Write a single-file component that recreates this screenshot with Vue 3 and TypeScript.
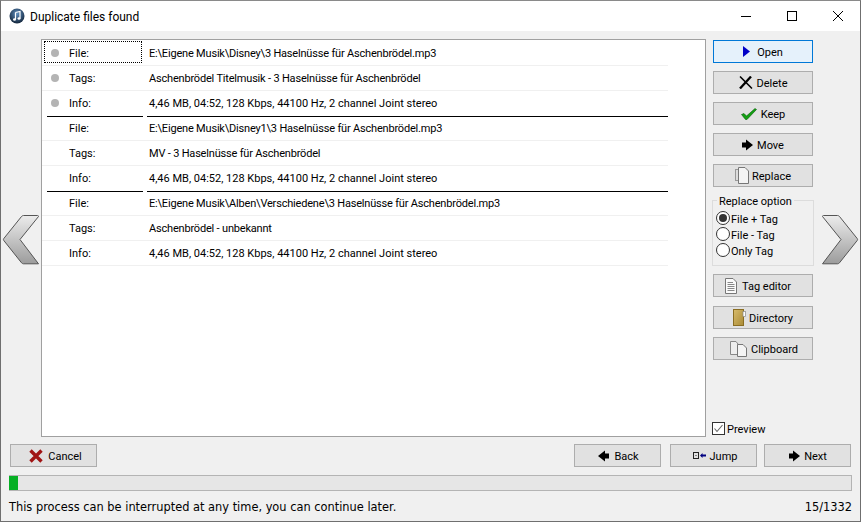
<script setup lang="ts">
interface Row { label: string; value: string; dot?: boolean; focus?: boolean; rule?: boolean }
const rows: Row[] = [
  { label: 'File:', value: 'E:\\Eigene Musik\\Disney\\3 Haselnüsse für Aschenbrödel.mp3', dot: true, focus: true },
  { label: 'Tags:', value: 'Aschenbrödel Titelmusik - 3 Haselnüsse für Aschenbrödel', dot: true },
  { label: 'Info:', value: '4,46 MB, 04:52, 128 Kbps, 44100 Hz, 2 channel Joint stereo', dot: true, rule: true },
  { label: 'File:', value: 'E:\\Eigene Musik\\Disney1\\3 Haselnüsse für Aschenbrödel.mp3' },
  { label: 'Tags:', value: 'MV - 3 Haselnüsse für Aschenbrödel' },
  { label: 'Info:', value: '4,46 MB, 04:52, 128 Kbps, 44100 Hz, 2 channel Joint stereo', rule: true },
  { label: 'File:', value: 'E:\\Eigene Musik\\Alben\\Verschiedene\\3 Haselnüsse für Aschenbrödel.mp3' },
  { label: 'Tags:', value: 'Aschenbrödel - unbekannt' },
  { label: 'Info:', value: '4,46 MB, 04:52, 128 Kbps, 44100 Hz, 2 channel Joint stereo' },
]
const options = ['File + Tag', 'File - Tag', 'Only Tag']
</script>

<template>
  <div class="window">
    <header class="titlebar">
      <svg class="app-icon" viewBox="0 0 16 16" width="16" height="16">
        <defs>
          <radialGradient id="ball" cx="50%" cy="35%" r="70%">
            <stop offset="0" stop-color="#5f8fc0" />
            <stop offset="1" stop-color="#0c1c30" />
          </radialGradient>
        </defs>
        <circle cx="8" cy="8" r="7.500" fill="url(#ball)" />
        <path d="M6.500 4.500 L11 3.500 V10.500 M6.500 4.500 V11.500" stroke="#fff" stroke-width="1.200" fill="none" />
        <ellipse cx="5.500" cy="11.500" rx="1.500" ry="1.200" fill="#fff" />
        <ellipse cx="10" cy="10.500" rx="1.500" ry="1.200" fill="#fff" />
      </svg>
      <span class="title">Duplicate files found</span>
      <div class="controls">
        <svg viewBox="0 0 46 30" width="46" height="30"><path d="M18 15.500h10" stroke="#000" /></svg>
        <svg viewBox="0 0 46 30" width="46" height="30"><rect x="18.500" y="10.500" width="9" height="9" fill="none" stroke="#000" /></svg>
        <svg viewBox="0 0 46 30" width="46" height="30"><path d="M18 10l10 10M28 10L18 20" stroke="#000" fill="none" /></svg>
      </div>
    </header>

    <main class="content">
      <div class="main-row">
        <div class="arrow-col left">
          <svg viewBox="0 0 36 50" width="36" height="50">
            <defs>
              <linearGradient id="chev" x1="0" y1="0" x2="0" y2="1">
                <stop offset="0" stop-color="#ececec" />
                <stop offset="1" stop-color="#9c9c9c" />
              </linearGradient>
            </defs>
            <path d="M35.500 1.500Q35.500 .5 34.500 .5H20.500Q19.500 .5 18.500 1.500L.8 23.500Q0 24.500 .8 25.500L18.500 47.800Q19.500 48.800 20.500 48.800H35.500L17 24.500Z" fill="url(#chev)" stroke="#555" stroke-width="1" />
          </svg>
        </div>

        <section class="list">
          <div v-for="(r, i) in rows" :key="i" class="row" :class="{ rule: r.rule }">
            <div class="cells">
              <div class="label-cell" :class="{ focus: r.focus }">
                <span class="dot-slot"><i v-if="r.dot" class="dot"></i></span>
                <span>{{ r.label }}</span>
              </div>
              <div class="value-cell" :class="{ tight: r.label !== 'Info:' }">{{ r.value }}</div>
            </div>
            <div class="sep"><i></i><i></i></div>
          </div>
        </section>

        <aside class="side">
          <button class="btn active">
            <svg viewBox="0 0 7 11" width="7" height="11"><path d="M0 0L7 5.500L0 11Z" fill="#0000c8" /></svg>
            <span>Open</span>
          </button>
          <button class="btn">
            <svg viewBox="0 0 14 13" width="14" height="13">
              <path d="M1 .5L13 12.500" stroke="#000" stroke-width="1.500" />
              <path d="M12 .5L1 12.500" stroke="#000" stroke-width="2.300" />
            </svg>
            <span>Delete</span>
          </button>
          <button class="btn">
            <svg viewBox="0 0 16 12" width="16" height="12"><path d="M.5 6.500L3 5.500L5.500 8L14 .5L15.500 1.500L6 11.500H4.500Z" fill="#12a012" stroke="#0a5c0a" stroke-width=".6" /></svg>
            <span>Keep</span>
          </button>
          <button class="btn">
            <svg viewBox="0 0 11 12" width="11" height="12"><path d="M0 3.500H4V.5L11 6L4 11.500V8.500H0Z" fill="#000" /></svg>
            <span>Move</span>
          </button>
          <button class="btn replace-btn">
            <svg viewBox="0 0 14 17" width="14" height="17">
              <rect x=".5" y="2.500" width="6" height="11" fill="#ddd" stroke="#999" />
              <path d="M3.500 .5H10L13.500 4V16.500H3.500Z" fill="#f4f4f4" stroke="#777" />
            </svg>
            <span>Replace</span>
          </button>

          <fieldset class="group">
            <legend>Replace option</legend>
            <label v-for="(o, i) in options" :key="o" class="radio">
              <span class="radio-mark"><i v-if="i === 0"></i></span>
              <span class="radio-text">{{ o }}</span>
            </label>
          </fieldset>

          <button class="btn tag-btn">
            <svg viewBox="0 0 12 16" width="12" height="16">
              <path d="M.5 .5H8L11.500 4V15.500H.5Z" fill="#fafafa" stroke="#777" />
              <path d="M2.500 4.500H8M2.500 6.500H9.500M2.500 8.500H9.500M2.500 10.500H9.500M2.500 12.500H9.500" stroke="#888" />
            </svg>
            <span>Tag editor</span>
          </button>
          <button class="btn dir-btn">
            <svg viewBox="0 0 13 17" width="13" height="17">
              <defs>
                <linearGradient id="gold" x1="0" y1="0" x2="1" y2="1">
                  <stop offset="0" stop-color="#d8bc6c" />
                  <stop offset="1" stop-color="#a98a36" />
                </linearGradient>
              </defs>
              <rect x=".5" y=".5" width="10" height="16" fill="url(#gold)" stroke="#8a6d22" />
              <rect x="10" y="2.500" width="2.500" height="5" fill="#fff" stroke="#888" stroke-width=".7" />
            </svg>
            <span>Directory</span>
          </button>
          <button class="btn clip-btn">
            <svg viewBox="0 0 17 16" width="17" height="16">
              <path d="M.5 .5H6L8 3V13.500H.5Z" fill="#eee" stroke="#888" />
              <path d="M7.500 3.500H13L16.500 7V15.500H7.500Z" fill="#f4f4f4" stroke="#777" />
            </svg>
            <span>Clipboard</span>
          </button>

          <label class="preview">
            <svg viewBox="0 0 13 13" width="13" height="13">
              <rect x=".5" y=".5" width="12" height="12" fill="#fff" stroke="#333" />
              <path d="M2.500 6.500L5 9.500L10.500 3" stroke="#666" stroke-width="1.100" fill="none" />
            </svg>
            <span class="preview-text">Preview</span>
          </label>
        </aside>

        <div class="arrow-col right">
          <svg viewBox="0 0 36 50" width="36" height="50">
            <defs>
              <linearGradient id="chev2" x1="0" y1="0" x2="0" y2="1">
                <stop offset="0" stop-color="#ececec" />
                <stop offset="1" stop-color="#9c9c9c" />
              </linearGradient>
            </defs>
            <path d="M.5 1.500Q.5 .5 1.500 .5H15.500Q16.500 .5 17.500 1.500L35.200 23.500Q36 24.500 35.200 25.500L17.500 47.800Q16.500 48.800 15.500 48.800H.5L19 24.500Z" fill="url(#chev2)" stroke="#555" stroke-width="1" />
          </svg>
        </div>
      </div>

      <div class="nav-row">
        <button class="btn nav cancel">
          <svg viewBox="0 0 14 14" width="14" height="14"><path d="M1.500 1.500L12.500 12.500M12.500 1.500L1.500 12.500" stroke="#a01414" stroke-width="3.400" /></svg>
          <span>Cancel</span>
        </button>
        <div class="nav-right">
          <button class="btn nav back">
            <svg viewBox="0 0 11 12" width="11" height="12"><path d="M11 3.500H7V.5L0 6L7 11.500V8.500H11Z" fill="#000" /></svg>
            <span>Back</span>
          </button>
          <button class="btn nav jump">
            <svg viewBox="0 0 13 7" width="13" height="7">
              <rect x=".5" y=".5" width="5" height="6" fill="none" stroke="#222" />
              <rect x="2.500" y="3" width="1" height="1" fill="#222" />
              <path d="M7 3.500L9.500 1V2.500H13V4.500H9.500V6Z" fill="#000080" />
            </svg>
            <span>Jump</span>
          </button>
          <button class="btn nav next">
            <svg viewBox="0 0 11 12" width="11" height="12"><path d="M0 3.500H4V.5L11 6L4 11.500V8.500H0Z" fill="#000" /></svg>
            <span>Next</span>
          </button>
        </div>
      </div>

      <div class="progress"><div class="fill" :style="{ width: '9px' }"></div></div>

      <footer class="status">
        <span>This process can be interrupted at any time, you can continue later.</span>
        <span>15/1332</span>
      </footer>
    </main>
  </div>
</template>

<style scoped>
.window {
  width: 861px;
  height: 522px;
  box-sizing: border-box;
  border: 1px solid #6f6f6f;
  border-top-color: #8a8a8a;
  background: #f0f0f0;
  display: flex;
  flex-direction: column;
  font-family: Roboto, "Noto Sans", sans-serif;
  font-size: 11px;
  color: #000;
  overflow: hidden;
}
.titlebar {
  height: 30px;
  flex: none;
  background: #fff;
  display: flex;
  align-items: center;
  padding-left: 8px;
}
.app-icon { flex: none; }
.title { margin-left: 5px; margin-top: 2px; font-size: 12px; }
.controls { margin-left: auto; display: flex; margin-right: -1px; }
.controls svg { display: block; }
.content { flex: 1; display: flex; flex-direction: column; min-height: 0; }
.main-row { display: flex; margin-top: 8px; height: 398px; flex: none; }
.arrow-col { display: flex; align-items: center; padding-top: 4px; }
.arrow-col svg { overflow: visible; }
.arrow-col.left { width: 40px; padding-left: 2px; box-sizing: border-box; }
.arrow-col.right { padding-left: 9px; }
.list {
  width: 665px;
  box-sizing: border-box;
  background: #fff;
  border: 1px solid #a0a0a0;
  padding-top: 1px;
  flex: none;
}
.row { width: 626px; }
.cells { display: flex; height: 24px; }
.row.rule .cells { height: 25px; }
.row.rule + .row .cells { height: 23px; }
.sep { height: 1px; display: flex; background: #f0f0f0; }
.sep i { display: none; }
.row.rule .sep { background: none; }
.row.rule .sep i { display: block; height: 1px; background: #000; }
.row.rule .sep i:first-child { width: 96px; margin-left: 5px; }
.row.rule .sep i:last-child { flex: 1; margin-left: 4px; }
.label-cell {
  width: 98px;
  margin-left: 2px;
  height: 22px;
  padding-top: 2px;
  box-sizing: border-box;
  display: flex;
  align-items: center;
  border: 1px dotted transparent;
  flex: none;
}
.row.rule + .row .label-cell { padding-top: 0; }
.label-cell.focus { border-color: #000; }
.dot-slot { width: 24px; flex: none; display: flex; padding-left: 6px; box-sizing: border-box; }
.dot { width: 8px; height: 8px; border-radius: 50%; background: #b4b4b4; display: block; }
.value-cell {
  margin-left: 7px;
  flex: 1;
  line-height: 26px;
  white-space: nowrap;
}
.row.rule + .row .value-cell { line-height: 24px; }
.value-cell.tight { letter-spacing: -0.19px; }
.side { width: 100px; margin-left: 7px; flex: none; display: flex; flex-direction: column; align-items: stretch; padding-top: 1px; }
.btn {
  height: 23px;
  box-sizing: border-box;
  background: #e1e1e1;
  border: 1px solid #adadad;
  padding: 0;
  margin: 0 0 8px;
  font: inherit;
  color: #000;
  display: flex;
  align-items: center;
  justify-content: center;
  gap: 4px;
  flex: none;
}
.btn svg { flex: none; }
.btn span { margin-top: 2px; }
.btn.active { background: #e5f1fb; border-color: #0078d7; gap: 7px; }
.replace-btn { gap: 3px; }
.group {
  margin: -3px -1px 0;
  padding: 1px 0 0 3px;
  height: 74px;
  box-sizing: border-box;
  border: 1px solid #dcdcdc;
  min-width: 0;
}
.group legend { padding: 2px 2px 0; margin-left: 1px; line-height: 15px; }
.radio { display: flex; align-items: center; height: 16px; gap: 1px; }
.radio-text { margin-top: 2px; }
.radio-mark {
  width: 14px;
  height: 14px;
  box-sizing: border-box;
  border: 1px solid #333;
  border-radius: 50%;
  background: #fff;
  display: flex;
  align-items: center;
  justify-content: center;
  flex: none;
}
.radio-mark i { width: 8px; height: 8px; border-radius: 50%; background: #333; display: block; }
.tag-btn { margin-top: 8px; margin-bottom: 9px; gap: 5px; padding-right: 10px; }
.dir-btn { gap: 3px; }
.clip-btn { margin-bottom: 0; padding-left: 2px; }
.preview { margin-top: auto; margin-left: -1px; display: flex; align-items: center; gap: 2px; margin-bottom: 1px; height: 15px; }
.preview-text { margin-top: 2px; }
.nav-row { display: flex; justify-content: space-between; margin-top: 7px; padding: 0 9px; flex: none; }
.nav-right { display: flex; }
.nav { width: 87px; margin: 0; gap: 5px; }
.cancel { padding-left: 4px; }
.back { padding-left: 2px; }
.next { padding-left: 1px; gap: 4px; }
.nav-right .nav:nth-child(1) { margin-right: 9px; }
.nav-right .nav:nth-child(2) { margin-right: 7px; }
.jump { gap: 4px; padding-left: 3px; }
.progress {
  margin: 8px 8px 0;
  height: 16px;
  flex: none;
  box-sizing: border-box;
  border: 1px solid #b4b4b4;
  border-left: 0;
  background: #e6e6e6;
  display: flex;
  overflow: hidden;
}
.fill { background: #06b025; height: 100%; }
.status {
  display: flex;
  justify-content: space-between;
  padding: 0 8px;
  margin-top: 7px;
  font-family: "DejaVu Sans", sans-serif;
  font-size: 11.4px;
  line-height: 18px;
}
</style>
